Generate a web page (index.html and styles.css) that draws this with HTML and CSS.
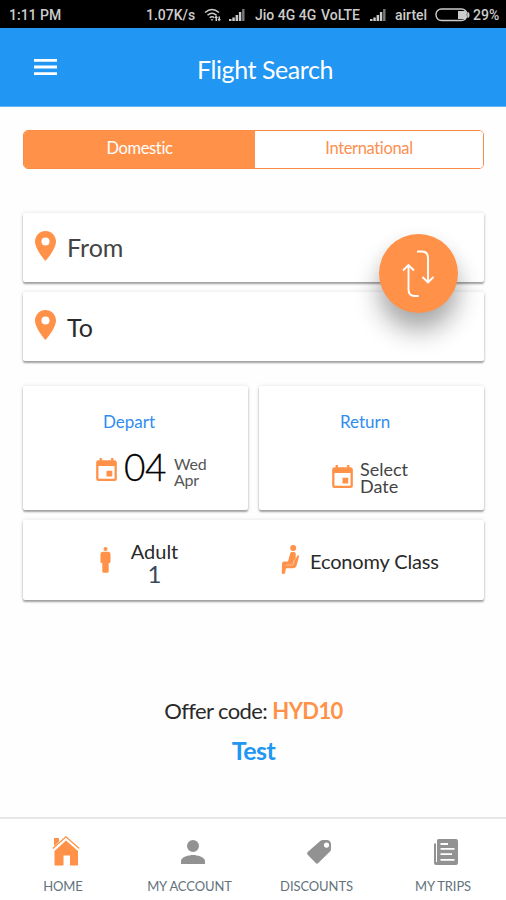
FILE: index.html
```html
<!DOCTYPE html>
<html lang="en">
<head>
<meta charset="utf-8">
<title>Flight Search</title>
<link rel="stylesheet" href="styles.css">
</head>
<body>
<svg class="defs" width="0" height="0" aria-hidden="true">
  <symbol id="pin" viewBox="5 2 14 20"><path d="M12 2C8.130 2 5 5.130 5 9c0 5.250 7 13 7 13s7-7.750 7-13c0-3.870-3.130-7-7-7zm0 9.700a2.700 2.700 0 1 1 0-5.400 2.700 2.700 0 0 1 0 5.400z"/></symbol>
  <symbol id="calendar" viewBox="3 1 18 20"><path d="M17 12h-5v5h5v-5zM16 1v2H8V1H6v2H5c-1.110 0-1.990.9-1.990 2L3 19a2 2 0 0 0 2 2h14c1.100 0 2-.9 2-2V5c0-1.100-.9-2-2-2h-1V1h-2zm3 18H5V8h14v11z"/></symbol>
  <symbol id="signal" viewBox="0 0 16 12"><path d="M0 12v-2h2.500v2zM3.300 12V8.500h2.500V12zM6.600 12V6h2.500v6zM9.900 12V3h2.400v9z"/><path opacity=".6" d="M13.100 12V0h2.400v12z"/></symbol>
</svg>
<div class="status">
  <span class="time">1:11 PM</span>
  <span class="speed">1.07K/s</span>
  <svg class="wifi" viewBox="0 0 18 14"><g fill="none" stroke="currentColor" stroke-width="1.500"><path d="M1 4.500Q8 -1.500 15 4.500M3.500 7.200q4.500-4 9 0M5.700 9.800q2.300-2 4.600 0"/></g><path d="M6.500 11.200h3L8 13zM12 7l2 3h-1v3h-1.500v-3h-1zM15 13.500l-1.500-2.500h1V8.500H16V11h1z"/></svg>
  <svg class="signal one"><use href="#signal"/></svg>
  <span class="jio">Jio 4G 4G</span>
  <span class="volte">VoLTE</span>
  <svg class="signal two"><use href="#signal"/></svg>
  <span class="airtel">airtel</span>
  <svg class="battery" viewBox="0 0 35 14"><rect x="1" y="1" width="31" height="11.500" rx="5.500" fill="none" stroke="currentColor" stroke-width="1.400"/><path d="M23 3h7q1 0 1 1v6q0 1-1 1h-7zM32.500 4q2 0 2 3t-2 3z"/></svg>
  <span class="percent">29%</span>
</div>
<header class="header">
  <svg class="menu" viewBox="0 0 23 16"><path d="M0 0h23v2.800H0zM0 6.600h23v2.800H0zM0 13.200h23V16H0z"/></svg>
  <h1>Flight Search</h1>
</header>
<main>
  <div class="tabs"><button class="tab active">Domestic</button><button class="tab">International</button></div>
  <section class="route">
    <div class="card place"><svg class="pin"><use href="#pin"/></svg><span class="from">From</span></div>
    <div class="card place"><svg class="pin"><use href="#pin"/></svg><span class="to">To</span></div>
    <button class="swap" aria-label="Swap"><svg viewBox="0 0 32 48"><path d="M15 1.500h4.500Q26 1.500 26 8v24M20.500 27l5.500 5.500 5.500-5.500M16.500 46H13q-6.500 0-6.500-6.500V15M1 20.500L6.500 15l5.500 5.500"/></svg></button>
  </section>
  <section class="dates">
    <div class="card date depart">
      <h2>Depart</h2>
      <div class="value"><svg class="calendar"><use href="#calendar"/></svg><span class="day">04</span><span class="month">Wed<br>Apr</span></div>
    </div>
    <div class="card date return">
      <h2>Return</h2>
      <div class="value"><svg class="calendar"><use href="#calendar"/></svg><span class="select">Select<br>Date</span></div>
    </div>
  </section>
  <section class="card travel">
    <svg class="person" viewBox="0 0 11 26"><circle cx="5.500" cy="2" r="2"/><path d="M3 4.800h5q2.500 0 2.500 2.500V15q0 1-1 1H8.700v8.500q0 1.200-1.500 1.200H3.800q-1.500 0-1.500-1.200V16H1.500q-1 0-1-1V7.300Q.5 4.800 3 4.800z"/></svg>
    <div class="adult"><span class="label">Adult</span><span class="count">1</span></div>
    <svg class="seat" viewBox="0 0 18 29"><circle cx="12.200" cy="3" r="3"/><path d="M10.500 7h2.500q1.600 0 1.700 1.500v6l1.300-3.200q.7-1.300 1.600-.8.700.4.300 1.500L15.700 20q-.8 3.200-4 3.200H5L4 28q-.2 1-1.800 1T.8 27.500L1 18.500q.1-2 2-2h4l2.200-8q.3-1.500 1.300-1.500z"/><path d="M5 20h5.500q1.500 0 2-1.500l.8-4" fill="none" stroke="#fff" stroke-width=".5"/></svg>
    <span class="class">Economy Class</span>
  </section>
  <section class="offer">
    <p><span class="offer-label">Offer code:</span> <b>HYD10</b></p>
    <strong>Test</strong>
  </section>
</main>
<nav class="nav">
  <a class="home"><svg viewBox="0 0 28 30"><path d="M2 2h5v5L2 12z"/><path d="M14 4.500L26 15v14.500h-8v-10h-6.500v10H2.500V15z"/><path d="M1 13L14 1l13 12" fill="none" stroke="#fff" stroke-width="3"/><path d="M.8 12.500L14 .8l13.200 11.700" fill="none" stroke="currentColor" stroke-width="1.300"/></svg><span>HOME</span></a>
  <a class="account"><svg viewBox="4 4 16 16"><path d="M12 12a4 4 0 1 0 0-8 4 4 0 0 0 0 8zm0 2c-2.670 0-8 1.340-8 4v2h16v-2c0-2.660-5.330-4-8-4z"/></svg><span>MY ACCOUNT</span></a>
  <a class="discounts"><svg viewBox="0 0 24 24"><path fill-rule="evenodd" d="M13.500.8Q14.500 0 16 0h4q1.500 0 2.300.8l.9 1Q24 2.600 24 4v5q0 1.500-1 2.500L11.300 23q-1.300 1.300-2.600 0l-8-8.300q-1.200-1.300 0-2.600zM19.500 2.500a2.600 2.600 0 1 0 0 5.200 2.600 2.600 0 0 0 0-5.200z"/></svg><span>DISCOUNTS</span></a>
  <a class="trips"><svg viewBox="0 0 24 26"><path fill-rule="evenodd" d="M4.500 0H22q2 0 2 2v22q0 2-2 2H2q-2 0-2-2V4.500h2V23h1V1.500Q3 0 4.500 0zM6.500 4v2H14V4zM6.500 9v1.700h14V9zM6.500 14.300V16H18v-1.700zM6.500 20v1.700h14V20z"/></svg><span>MY TRIPS</span></a>
</nav>
</body>
</html>
```

FILE: styles.css
```css
* { box-sizing: border-box; }
body { margin: 0; width: 506px; height: 900px; overflow: hidden; display: flex; flex-direction: column; background: #fefefe; font-family: Lato, "Liberation Sans", sans-serif; font-variant-ligatures: none; color: #2a2a2a; }
svg { display: block; fill: currentColor; flex: none; }
.defs { position: absolute; }
button { font: inherit; border: 0; margin: 0; padding: 0; }
h1, h2, p { margin: 0; font-weight: 400; }
span, h1 { white-space: nowrap; }

.status { height: 28px; flex: none; display: flex; align-items: center; padding: 2px 0 0 9px; background: #000; color: #ccc; font: 500 14px/26px Roboto, sans-serif; }
.status span { flex: none; }
.time { width: 137px; }
.speed { width: 58px; }
.wifi { width: 18px; height: 14px; margin-right: 7px; }
.signal { width: 16px; height: 12px; }
.signal.one { margin-right: 10px; }
.jio { width: 66px; }
.volte { width: 49px; }
.signal.two { margin-right: 9px; }
.airtel { width: 40px; }
.battery { width: 35px; height: 14px; margin-right: 3px; }

.header { height: 79px; flex: none; display: flex; align-items: center; padding-left: 34px; background: #2196f3; color: #fff; border-bottom: 1px solid #62b3f5; }
.menu { width: 23px; height: 16px; margin-right: 140px; }
h1 { font-size: 25px; line-height: 32px; padding-top: 3px; letter-spacing: -.42px; }

main { flex: 1; padding: 23px 22px 0 23px; }
.tabs { display: grid; grid-template-columns: 231px 1fr; height: 39px; border: 1.500px solid #f98b47; border-radius: 5px; overflow: hidden; }
.tab { background: #fff; color: #fd8f50; font-size: 16.500px; letter-spacing: -.35px; line-height: 20px; padding-bottom: 4px; }
.tab.active { background: #ff9248; color: #fff; }

.card { background: #fff; border-radius: 2px; box-shadow: 0 2px 2px rgba(0,0,0,.34), 0 0 4px rgba(0,0,0,.12); }
.route { position: relative; display: grid; gap: 10px; margin-top: 44px; }
.place { height: 69px; display: flex; align-items: center; padding-left: 12px; font-size: 25px; }
.place span { margin-top: -2px; }
.place .to { margin-top: 0; }
.from { color: #444; }
.pin { width: 21px; height: 30px; margin: -3px 11px 0 0; color: #ff9248; }
.swap { position: absolute; right: 26.500px; top: 21px; width: 79px; height: 79px; display: grid; place-items: center; border-radius: 50%; background: #ff9248; box-shadow: 0 18px 26px rgba(0,0,0,.33), 0 4px 20px rgba(0,0,0,.04); }
.swap svg { width: 32px; height: 48px; fill: none; stroke: #fff; stroke-width: 1.900; }

.dates { display: grid; grid-template-columns: 1fr 1fr; gap: 11px; margin-top: 25px; }
.date { height: 124px; padding-top: 25px; }
h2 { color: #2f8df0; font-size: 17px; line-height: 22px; }
.depart h2 { padding-left: 80px; }
.return h2 { padding-left: 81px; }
.value { display: flex; align-items: center; }
.depart .value { padding: 19px 0 0 72px; }
.return .value { padding: 24px 0 0 72px; }
.calendar { width: 23px; height: 23px; color: #ff9248; }
.day { font-size: 37px; line-height: 40px; margin: -7px 8px 0 6px; letter-spacing: -.5px; font-weight: 300; color: #000; -webkit-text-stroke: .3px #000; }
.month { font-size: 16px; line-height: 16px; color: #555; padding-top: 4px; letter-spacing: -.2px; }
.depart .calendar { margin-top: -1px; }
.select { font-size: 18px; line-height: 17px; color: #444; margin-left: 6px; padding-top: 4px; }

.travel { display: flex; height: 80px; margin-top: 10px; padding-left: 77px; }
.person { width: 11px; height: 26px; margin: 27px 19px 0 0; color: #ff9248; }
.adult { width: 49px; margin-right: 102px; padding-top: 20px; display: flex; flex-direction: column; align-items: center; }
.label { font-size: 20px; line-height: 23px; }
.count { font-size: 24px; line-height: 22px; color: #34495e; }
.seat { width: 18px; height: 29px; margin: 25px 11px 0 0; color: #ff9248; }
.class { font-size: 20px; line-height: 24px; margin-top: 29px; letter-spacing: -.15px; }

.offer { margin-top: 97px; display: flex; flex-direction: column; align-items: center; font-size: 22px; line-height: 28px; }
.offer p { letter-spacing: -.6px; }
.offer b { color: #ff9248; }
.offer strong { color: #2196f3; font-size: 25px; line-height: 30px; margin-top: 10px; letter-spacing: -.5px; }

.nav { height: 83px; flex: none; display: grid; grid-template-columns: 126px 127px 127px 126px; border-top: 2px solid #e7e7e7; background: #fff; color: #929292; }
.nav a { display: grid; grid-template-rows: 30px 18px; row-gap: 10px; justify-items: center; align-items: center; align-content: start; padding-top: 18px; }
.nav svg { width: 24px; height: 24px; margin-left: 5px; }
.nav .home svg { width: 28px; height: 30px; color: #ff9248; margin: -1px 0 1px 5px; }
.nav .account svg { margin-left: 6px; }
.nav .trips svg { height: 26px; }
.nav span { font-size: 13px; line-height: 18px; color: #63727b; letter-spacing: -.1px; }
```
